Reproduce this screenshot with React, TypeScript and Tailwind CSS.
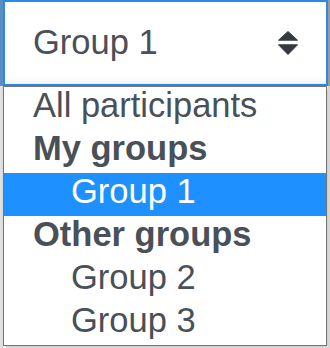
const font = { fontFamily: '"Liberation Sans", Arial, sans-serif' };

type Row = { label: string; kind: 'option' | 'group' | 'child'; selected?: boolean };

const rows: Row[] = [
  { label: 'All participants', kind: 'option' },
  { label: 'My groups', kind: 'group' },
  { label: 'Group 1', kind: 'child', selected: true },
  { label: 'Other groups', kind: 'group' },
  { label: 'Group 2', kind: 'child' },
  { label: 'Group 3', kind: 'child' },
];

function SortIcon() {
  return (
    <svg width="20" height="24" viewBox="0 0 20 24" className="shrink-0">
      <path d="M10 0.5 L19.5 9.2 L0.5 9.2 Z" fill="#343a40" stroke="#343a40" strokeWidth="1" strokeLinejoin="round" />
      <path d="M0.5 13.8 L19.5 13.8 L10 23.5 Z" fill="#343a40" stroke="#343a40" strokeWidth="1" strokeLinejoin="round" />
    </svg>
  );
}

export default function App() {
  return (
    <div className="flex w-[330px] h-[348px] bg-white overflow-hidden" style={font}>
      {/* page edge peeking on the left */}
      <div className="w-[3px] flex flex-col">
        <div className="h-[86px] bg-[#5b8ec4]" />
        <div className="flex-1 bg-[#e2e2e2]" />
      </div>

      <div className="w-[325px] flex flex-col">
        {/* closed select */}
        <div className="h-[86px] border-2 border-[#2a8ae8] bg-white flex items-center justify-between pl-[28px] pr-[28px] shadow-[inset_0_-8px_8px_-8px_rgba(0,0,0,0.12)]">
          <span className="text-[34.5px] leading-none text-[#495057] pb-[2px]">Group 1</span>
          <SortIcon />
        </div>

        {/* open option list */}
        <div className="w-[324px] h-[260px] border border-[#767676] bg-white shadow-[2px_2px_4px_rgba(0,0,0,0.25)]">
          {rows.map((r) => (
            <div
              key={r.label}
              className={`h-[43px] leading-[37px] text-[34.5px] whitespace-nowrap ${
                r.kind === 'child' ? 'pl-[67px]' : 'pl-[29px]'
              } ${r.kind === 'group' ? 'font-bold' : ''} ${
                r.selected ? 'bg-[#1e90ff] text-white' : 'text-[#495057]'
              }`}
            >
              {r.label}
            </div>
          ))}
        </div>
      </div>

      <div className="w-[2px] flex flex-col">
        <div className="h-[86px] bg-[#9a9a9a]" />
        <div className="flex-1 bg-[#d6d6d6]" />
      </div>
    </div>
  );
}
